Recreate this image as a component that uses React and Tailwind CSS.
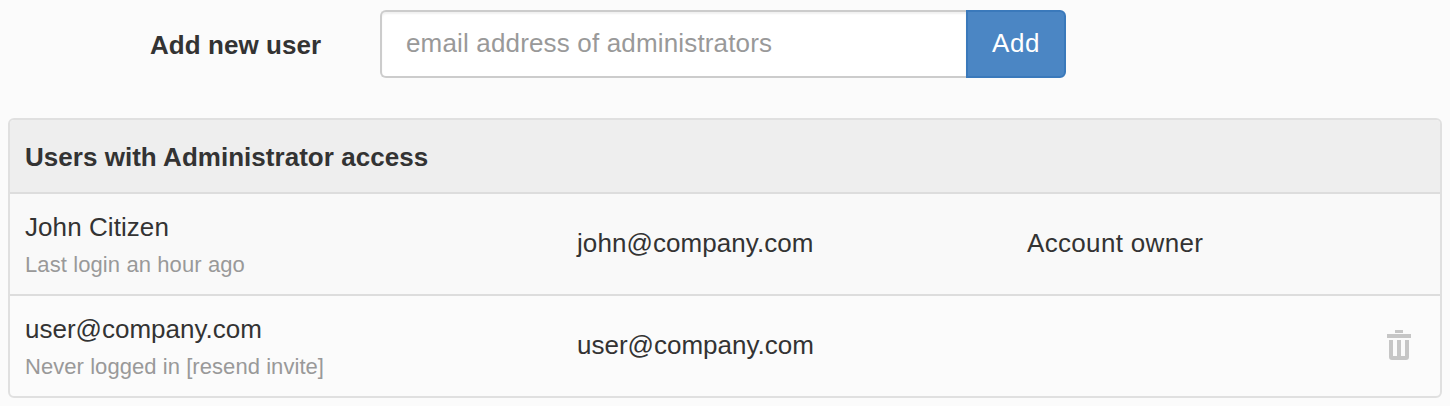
function Trash() {
  return (
    <svg width="24" height="30" viewBox="0 0 24 30" fill="#c6c6c6" aria-hidden="true">
      <path d="M8 0h8v3H8zM0 4h24v4H0z" />
      <path d="M2 10h4v16h4V10h4v16h4V10h4v17q0 3-3 3H5q-3 0-3-3z" />
    </svg>
  );
}

export default function App() {
  return (
    <main className="h-[406px] w-[1450px] overflow-hidden bg-[#fbfbfb] px-2 pt-2.5 font-['Liberation_Sans',Arial,sans-serif] text-[26px] leading-[36px] text-[#333]">
      <form className="flex h-[68px] items-center" onSubmit={(e) => e.preventDefault()}>
        <label htmlFor="email" className="w-[372px] pt-0.5 pl-[142px] font-bold tracking-[0.07px] whitespace-nowrap"><span>Add new user</span></label>
        <input id="email" placeholder="email address of administrators" className="h-[68px] w-[586px] rounded-l-[6px] border-2 border-r-0 border-[#ccc] bg-white pb-0.5 pl-6 tracking-[0.16px] shadow-[inset_0_2px_2px_rgba(0,0,0,0.06)] outline-none placeholder:text-[#999]" />
        <button className="h-[68px] w-[100px] rounded-r-[6px] border-2 border-[#3a79bb] bg-[#4b86c4] pb-0.5 tracking-[0.5px] text-white">Add</button>
      </form>
      <section className="mt-10 h-[280px] w-[1434px] overflow-hidden rounded-[6px] border-2 border-[#e0e0e0]">
        <h2 className="flex h-[74px] items-center border-b-2 border-[#ddd] bg-[#eee] pt-0.5 pl-[15px] font-bold tracking-[0.03px]"><span>Users with Administrator access</span></h2>
        <div className="flex h-[102px] items-center border-b-2 border-[#ddd] bg-[#f9f9f9] pl-[15px]">
          <div className="w-[552px] pt-1 leading-[38px]"><p className="tracking-[0.07px]">John Citizen</p><p className="text-[22px] tracking-[0.1px] text-[#999]">Last login an hour ago</p></div>
          <p className="w-[450px] pb-0.5 tracking-[0.07px]">john@company.com</p>
          <p className="pb-0.5 tracking-[0.33px]">Account owner</p>
        </div>
        <div className="flex h-[100px] items-center pl-[15px]">
          <div className="w-[552px] pt-1 leading-[38px]"><p>user@company.com</p><p className="text-[22px] tracking-[0.06px] text-[#999]">Never logged in [resend invite]</p></div>
          <p className="w-[810px] pb-0.5">user@company.com</p>
          <button aria-label="Delete user" className="pb-0.5"><Trash /></button>
        </div>
      </section>
    </main>
  );
}
